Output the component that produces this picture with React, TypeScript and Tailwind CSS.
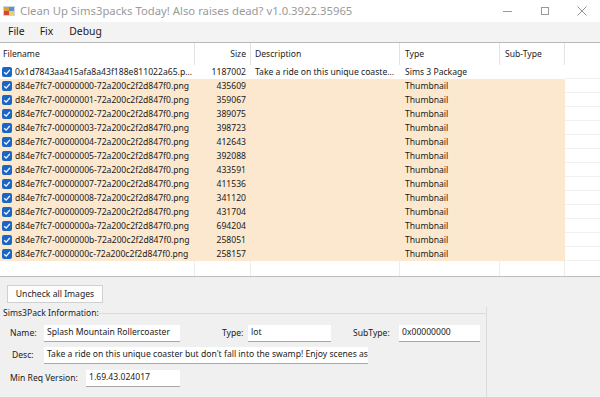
import React from "react";

const rows = [
  { name: "0x1d7843aa415afa8a43f188e811022a65.p...", size: "1187002", desc: "Take a ride on this unique coaste...", type: "Sims 3 Package", hi: false },
  ...["00000000", "00000001", "00000002", "00000003", "00000004", "00000005", "00000006", "00000007", "00000008", "00000009", "0000000a", "0000000b", "0000000c"].map((id, i) => ({
    name: `d84e7fc7-${id}-72a200c2f2d847f0.png`,
    size: ["435609", "359067", "389075", "398723", "412643", "392088", "433591", "411536", "341120", "431704", "694204", "258051", "258157"][i],
    desc: "",
    type: "Thumbnail",
    hi: true,
  })),
];

function Check() {
  return (
    <svg width="10" height="10" viewBox="0 0 10 10" className="shrink-0">
      <rect x="0" y="0" width="10" height="10" rx="2" fill="#1a66c8" />
      <path d="M2.2 5.2 L4.2 7.1 L7.9 2.9" stroke="white" strokeWidth="1.3" fill="none" />
    </svg>
  );
}

function AppIcon() {
  return (
    <svg width="12" height="12" viewBox="0 0 12 12">
      <rect x="0" y="1" width="12" height="10" fill="#c9d6e6" />
      <rect x="1" y="2" width="5" height="4" fill="#e0a030" />
      <rect x="6" y="2" width="5" height="4" fill="#5b8fd0" />
      <rect x="1" y="6" width="5" height="4" fill="#d04a3a" />
      <rect x="6" y="6" width="5" height="4" fill="#f2d060" />
    </svg>
  );
}

function Field({ w, children }: { w: string; children?: React.ReactNode }) {
  return (
    <div className={`${w} h-[17px] bg-white border-b border-[#a8a8a8] px-[3px] flex items-center overflow-hidden whitespace-nowrap`}>
      {children}
    </div>
  );
}

export default function App() {
  const font = { fontFamily: '"Noto Sans", "Liberation Sans", sans-serif' };
  return (
    <div className="w-[600px] h-[397px] bg-[#f0f0f0] text-[#1a1a1a] flex flex-col overflow-hidden" style={font}>
      {/* title bar */}
      <div className="h-[22px] bg-white flex items-center shrink-0">
        <div className="pl-[3px] pr-[5px]"><AppIcon /></div>
        <span className="text-[11.3px] text-[#9a9a9a] whitespace-nowrap">Clean Up Sims3packs Today! Also raises dead? v1.0.3922.35965</span>
        <div className="ml-auto flex items-center h-full">
          <div className="w-[37px] flex justify-center"><div className="w-[9px] h-px bg-[#999]" /></div>
          <div className="w-[37px] flex justify-center"><div className="w-[8px] h-[8px] border border-[#999]" /></div>
          <div className="w-[37px] flex justify-center">
            <svg width="10" height="10" viewBox="0 0 10 10"><path d="M0.5 0.5 L9.5 9.5 M9.5 0.5 L0.5 9.5" stroke="#888" strokeWidth="0.9" /></svg>
          </div>
        </div>
      </div>

      {/* menu */}
      <div className="h-[21px] bg-[#f3f3f3] flex items-center text-[10.4px] shrink-0 border-b border-[#b8b8b8]">
        <span className="ml-[8px]">File</span>
        <span className="ml-[15px]">Fix</span>
        <span className="ml-[16px]">Debug</span>
      </div>

      {/* list */}
      <div className="bg-white h-[234px] shrink-0 flex flex-col text-[8.6px] border-b border-[#bdbdbd]">
        <div className="h-[22px] flex items-center text-[#222] shrink-0">
          <div className="w-[195px] pl-[3px] border-r border-[#e3e3e3] h-full flex items-center">Filename</div>
          <div className="w-[56px] pr-[4px] border-r border-[#e3e3e3] h-full flex items-center justify-end">Size</div>
          <div className="w-[149px] pl-[4px] border-r border-[#e3e3e3] h-full flex items-center">Description</div>
          <div className="w-[100px] pl-[5px] border-r border-[#e3e3e3] h-full flex items-center">Type</div>
          <div className="w-[65px] pl-[5px] border-r border-[#e3e3e3] h-full flex items-center">Sub-Type</div>
          <div className="flex-1" />
        </div>
        {rows.map((r) => (
          <div key={r.name} className="h-[14px] flex items-center shrink-0 whitespace-nowrap">
            <div className={`w-[565px] h-full flex items-center ${r.hi ? "bg-[#fce8cf]" : "bg-white"}`}>
              <div className="w-[195px] pl-[2px] flex items-center gap-[3px] overflow-hidden">
                <Check />
                <span>{r.name}</span>
              </div>
              <div className="w-[56px] pr-[5px] text-right">{r.size}</div>
              <div className="w-[149px] pl-[4px] overflow-hidden">{r.desc}</div>
              <div className="w-[100px] pl-[5px]">{r.type}</div>
              <div className="w-[65px]" />
            </div>
            <div className="flex-1 h-full border-b border-[#f0f0f0]" />
          </div>
        ))}
        <div className="flex-1 flex">
          <div className="w-[195px] border-r border-[#ececec]" />
          <div className="w-[56px] border-r border-[#ececec]" />
          <div className="w-[149px] border-r border-[#ececec]" />
          <div className="w-[100px] border-r border-[#ececec]" />
          <div className="w-[65px] border-r border-[#ececec]" />
        </div>
      </div>

      {/* bottom panel */}
      <div className="flex-1 text-[8.6px] relative">
        <div className="pt-[8px] pl-[7px]">
          <div className="w-[96px] h-[18px] bg-[#fdfdfd] border border-[#d0d0d0] flex items-center justify-center">Uncheck all Images</div>
        </div>
        <div className="mt-[4px] flex items-start">
          <div className="w-[487px] border-r border-[#dcdcdc] h-[90px] relative">
            <div className="absolute top-[6px] left-[96px] right-0 h-px bg-[#dcdcdc]" />
            <div className="pl-[3px] h-[13px] flex items-center">Sims3Pack Information:</div>
            <div className="flex items-center mt-[3px] h-[20px]">
              <span className="w-[44px] pl-[10px]">Name:</span>
              <Field w="w-[136px]">Splash Mountain Rollercoaster</Field>
              <span className="ml-[42px] w-[26px]">Type:</span>
              <Field w="w-[83px]">lot</Field>
              <span className="ml-[22px] w-[46px]">SubType:</span>
              <Field w="w-[81px]">0x00000000</Field>
            </div>
            <div className="flex items-center mt-[2px] h-[20px]">
              <span className="w-[44px] pl-[12px]">Desc:</span>
              <Field w="w-[324px]">Take a ride on this unique coaster but don't fall into the swamp! Enjoy scenes as you</Field>
            </div>
            <div className="flex items-center mt-[3px] h-[20px]">
              <span className="w-[86px] pl-[10px] whitespace-nowrap">Min Req Version:</span>
              <Field w="w-[94px]">1.69.43.024017</Field>
            </div>
          </div>
        </div>
      </div>
    </div>
  );
}
